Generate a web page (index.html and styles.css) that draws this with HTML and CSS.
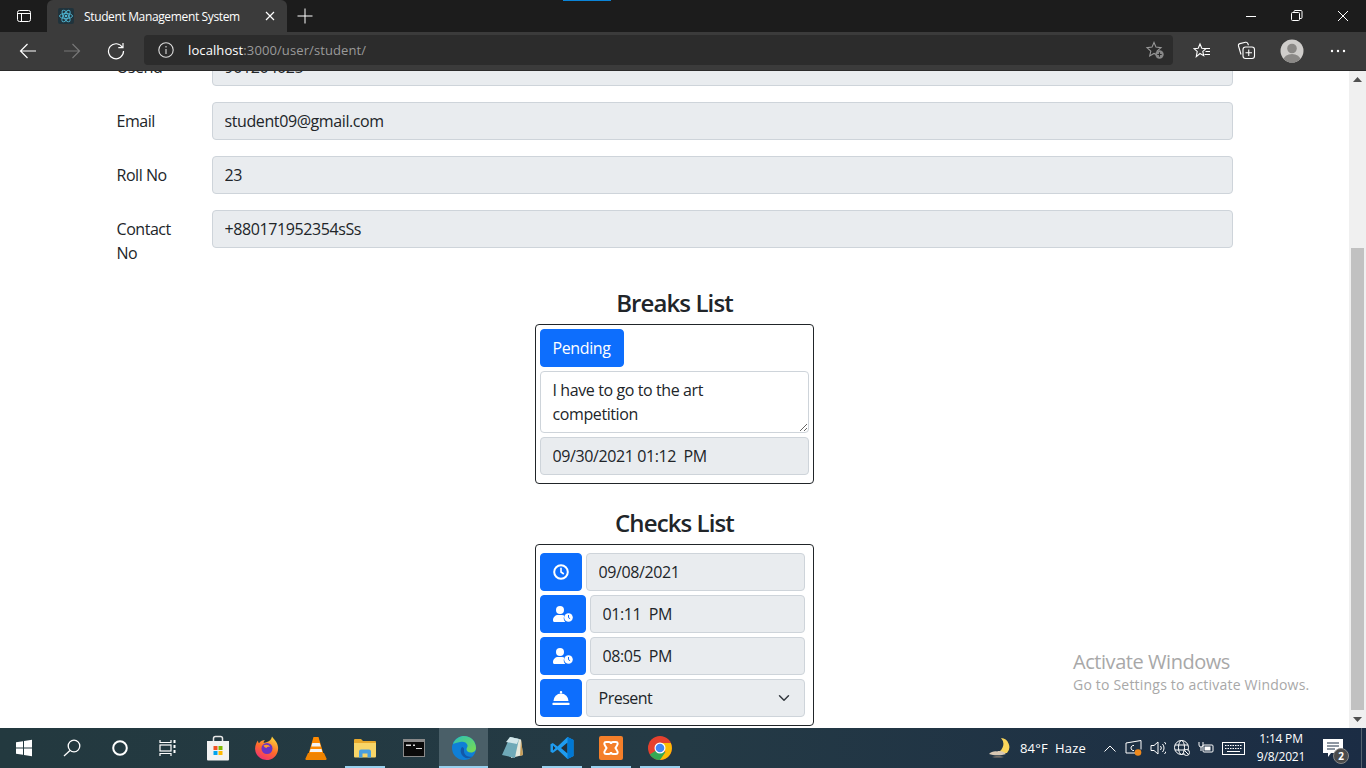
FILE: index.html
```html
<!DOCTYPE html>
<html lang="en">
<head>
    <meta charset="UTF-8">
    <meta name="viewport" content="width=device-width, initial-scale=1.0">
    <title>Student Management System</title>
    <link rel="stylesheet" href="styles.css">
</head>
<body>
    <div class="tabstrip">
        <div class="loading-line"></div>
        <div class="panel-btn">
            <svg width="16" height="16" viewBox="0 0 16 16" fill="none" stroke="#fff"><rect x="1.5" y="2.5" width="13" height="11" rx="2"/><path d="M1.5 5.5h13M5.5 5.5v8"/></svg>
        </div>
        <div class="tab">
            <svg class="favicon" width="16" height="16" viewBox="0 0 16 16" fill="none" stroke="#4fb6d3" stroke-width=".9"><rect width="16" height="16" rx="2" fill="#20333c" stroke="none"/><ellipse cx="8" cy="8" rx="6.5" ry="2.6"/><ellipse cx="8" cy="8" rx="6.5" ry="2.6" transform="rotate(60 8 8)"/><ellipse cx="8" cy="8" rx="6.5" ry="2.6" transform="rotate(120 8 8)"/><circle cx="8" cy="8" r="1.3" fill="#4fb6d3" stroke="none"/></svg>
            <span class="tab-title">Student Management System</span>
            <svg class="tab-close" width="10" height="10" viewBox="0 0 10 10" stroke="#fff" stroke-width="1.2"><path d="M1 1l8 8M9 1l-8 8"/></svg>
        </div>
        <div class="new-tab">
            <svg width="16" height="16" viewBox="0 0 16 16" stroke="#fff"><path d="M8 .5v15M.5 8h15"/></svg>
        </div>
        <div class="window-btns">
            <div class="window-btn"><svg width="12" height="12" viewBox="0 0 12 12" stroke="#fff"><path d="M1 6.5h10"/></svg></div>
            <div class="window-btn"><svg width="12" height="12" viewBox="0 0 12 12" fill="none" stroke="#fff"><rect x=".5" y="2.5" width="8" height="8" rx="1"/><path d="M3 2.5V1.5a1 1 0 0 1 1-1h6a1 1 0 0 1 1 1v6a1 1 0 0 1-1 1H8.5"/></svg></div>
            <div class="window-btn"><svg width="12" height="12" viewBox="0 0 12 12" stroke="#fff"><path d="M1 1l10 10M11 1L1 11"/></svg></div>
        </div>
    </div>

    <div class="toolbar">
        <div class="tool-btn"><svg width="18" height="18" viewBox="0 0 18 18" fill="none" stroke="#fff" stroke-width="1.2"><path d="M17 9H1.5M8.5 2L1.5 9l7 7"/></svg></div>
        <div class="tool-btn"><svg width="18" height="18" viewBox="0 0 18 18" fill="none" stroke="#777" stroke-width="1.2"><path d="M1 9h15.5M9.5 2l7 7-7 7"/></svg></div>
        <div class="tool-btn"><svg width="18" height="18" viewBox="0 0 18 18" fill="none" stroke="#fff" stroke-width="1.2"><path d="M15.5 5.5A7.5 7.5 0 1 0 16.5 9M16 1v4.7h-4.7"/></svg></div>
        <div class="address">
            <svg class="info-icon" width="16" height="16" viewBox="0 0 16 16" fill="none" stroke="#ddd" stroke-width="1.1"><circle cx="8" cy="8" r="7.2"/><path d="M8 7v5M8 4v1.6"/></svg>
            <span class="host">localhost</span><span class="url-rest">:3000/user/student/</span>
            <svg class="star-add" width="20" height="20" viewBox="0 0 20 20" fill="none" stroke="#999" stroke-width="1.1"><path d="M9 2.5l2 4.6 5 .5-3.8 3.3 1.1 4.900L9 13.500 4.700 16l1.100-4.900L2 7.600l5-.5z"/><circle cx="14.500" cy="14.500" r="4.200" fill="#888" stroke="none"/><path d="M14.500 12.300v4.400M12.300 14.500h4.400" stroke="#2b2b2b"/></svg>
        </div>
        <div class="tool-btn first-right"><svg width="18" height="18" viewBox="0 0 18 18" fill="none" stroke="#fff" stroke-width="1.1"><path d="M7 2l1.800 4.200 4.200.4-3.200 2.800.9 4.300L7 11.500 3.300 14.700l.9-5.300L1 6.600l4.200-.4zM12 6.500h5M12.500 9.500h4.500M11.500 12.500h5.500"/></svg></div>
        <div class="tool-btn"><svg width="20" height="20" viewBox="0 0 20 20" fill="none" stroke="#fff" stroke-width="1.1"><path d="M5 13.500 2.500 5a2 2 0 0 1 1.400-2.400l5.600-1.300a2 2 0 0 1 2.300 1.200l.7 1.700"/><rect x="7" y="6" width="11.500" height="11.500" rx="2.500" fill="#3b3b3b"/><path d="M12.750 8.500v6.500M9.500 11.750H16"/></svg></div>
        <div class="tool-btn wide"><svg width="24" height="24" viewBox="0 0 24 24"><defs><clipPath id="av"><circle cx="12" cy="12" r="11.500"/></clipPath></defs><circle cx="12" cy="12" r="11.500" fill="#cfcdcb"/><g clip-path="url(#av)" fill="#8b8987"><circle cx="12" cy="9.500" r="4.800"/><ellipse cx="12" cy="21" rx="8.500" ry="6"/></g></svg></div>
        <div class="tool-btn"><svg width="16" height="4" viewBox="0 0 16 4" fill="#fff"><circle cx="2" cy="2" r="1.200"/><circle cx="8" cy="2" r="1.200"/><circle cx="14" cy="2" r="1.200"/></svg></div>
    </div>

    <div class="viewport">
        <main class="page">
            <div class="container">
                <div class="form-row">
                    <label class="row-label">Userid</label>
                    <input class="form-control" value="901204025" disabled>
                </div>
                <div class="form-row">
                    <label class="row-label">Email</label>
                    <input class="form-control" value="student09@gmail.com" disabled>
                </div>
                <div class="form-row">
                    <label class="row-label">Roll No</label>
                    <input class="form-control" value="23" disabled>
                </div>
                <div class="form-row">
                    <label class="row-label">Contact No</label>
                    <input class="form-control" value="+880171952354sSs" disabled>
                </div>

                <h3 class="list-title breaks-title">Breaks List</h3>
                <div class="list-box breaks-box">
                    <button class="btn pending-btn">Pending</button>
                    <textarea class="form-control break-text" rows="2">I have to go to the art competition</textarea>
                    <input class="form-control" value="09/30/2021 01:12  PM" disabled>
                </div>

                <h3 class="list-title checks-title">Checks List</h3>
                <div class="list-box checks-box">
                    <div class="check-row">
                        <button class="btn icon-btn">
                            <svg width="16" height="16" viewBox="0 0 16 16" fill="none" stroke="#fff" stroke-width="2"><circle cx="8" cy="8" r="6.800"/><path d="M8 3.800V8l2.800 2" stroke-width="1.600"/></svg>
                        </button>
                        <input class="form-control" value="09/08/2021" disabled>
                    </div>
                    <div class="check-row">
                        <button class="btn icon-btn user-btn">
                            <svg width="20" height="16" viewBox="0 0 20 16" fill="#fff"><circle cx="7" cy="4" r="4"/><path d="M0 14.200C0 11 2.500 9 5 9h4c1 0 1.800.3 2.400.7a5.500 5.500 0 0 0 .9 6.300H1.500C.6 16 0 15.200 0 14.200z"/><circle cx="15.500" cy="11.500" r="4.300"/><path d="M15.500 9v2.700l1.600 1" stroke="#0d6efd" fill="none"/></svg>
                        </button>
                        <input class="form-control" value="01:11  PM" disabled>
                    </div>
                    <div class="check-row">
                        <button class="btn icon-btn user-btn">
                            <svg width="20" height="16" viewBox="0 0 20 16" fill="#fff"><circle cx="7" cy="4" r="4"/><path d="M0 14.200C0 11 2.500 9 5 9h4c1 0 1.800.3 2.400.7a5.500 5.500 0 0 0 .9 6.300H1.500C.6 16 0 15.200 0 14.200z"/><circle cx="15.500" cy="11.500" r="4.300"/><path d="M15.500 9v2.700l1.600 1" stroke="#0d6efd" fill="none"/></svg>
                        </button>
                        <input class="form-control" value="08:05  PM" disabled>
                    </div>
                    <div class="check-row">
                        <button class="btn icon-btn">
                            <svg width="18" height="16" viewBox="0 0 18 16" fill="#fff"><rect x="7.800" y="1" width="2.400" height="2.500" rx="1"/><path d="M1.500 11a7.500 7.500 0 0 1 15 0z"/><rect x=".5" y="12.800" width="17" height="2.200" rx=".6"/></svg>
                        </button>
                        <select class="form-select"><option>Present</option></select>
                    </div>
                </div>
            </div>
        </main>
        <div class="scrollbar">
            <div class="scroll-arrow"><svg width="9" height="5" viewBox="0 0 9 5" fill="#505050"><path d="M4.500 0L9 5H0z"/></svg></div>
            <div class="scroll-thumb"></div>
            <div class="scroll-arrow arrow-down"><svg width="9" height="5" viewBox="0 0 9 5" fill="#505050"><path d="M0 0h9L4.500 5z"/></svg></div>
        </div>
        <div class="watermark">
            <div class="watermark-big">Activate Windows</div>
            <div class="watermark-small">Go to Settings to activate Windows.</div>
        </div>
    </div>

    <div class="taskbar">
        <div class="task-item"><svg width="18" height="18" viewBox="0 0 18 18" fill="#fff"><path d="M1 3.200l7-1v6.300H1zM9 2l8-1.200v7.700H9zM1 9.500h7v6.300l-7-1zM9 9.500h8v7.700l-8-1.200z"/></svg></div>
        <div class="task-item"><svg width="18" height="18" viewBox="0 0 18 18" fill="none" stroke="#fff" stroke-width="1.300"><circle cx="11" cy="7" r="5.800"/><path d="M7 11.500L1 17"/></svg></div>
        <div class="task-item"><svg width="16" height="16" viewBox="0 0 16 16" fill="none" stroke="#fff" stroke-width="2"><circle cx="8" cy="8" r="6.800"/></svg></div>
        <div class="task-item"><svg width="18" height="16" viewBox="0 0 18 16" fill="none" stroke="#fff" stroke-width="1.200"><path d="M1 0v2.500h11V0M1 16v-2.500h11V16"/><rect x="1" y="5" width="11" height="6"/><path d="M15.500 0v3M15.500 5v3M15.500 10v3" stroke-width="2"/></svg></div>
        <div class="task-item app first-app"><svg width="24" height="26" viewBox="0 0 24 26"><path d="M7.500 7V3.500a2 2 0 0 1 2-2h5a2 2 0 0 1 2 2V7" fill="none" stroke="#e8e8e8" stroke-width="1.500"/><path d="M1 6h22v18.500a1 1 0 0 1-1 1H2a1 1 0 0 1-1-1z" fill="#f2f2f2"/><rect x="7.500" y="11" width="4" height="4" fill="#f25022"/><rect x="12.500" y="11" width="4" height="4" fill="#7fba00"/><rect x="7.500" y="16" width="4" height="4" fill="#00a4ef"/><rect x="12.500" y="16" width="4" height="4" fill="#ffb900"/></svg></div>
        <div class="task-item app"><svg width="24" height="24" viewBox="0 0 24 24"><defs><linearGradient id="fx" x1="0.700" y1="0" x2="0.200" y2="1"><stop offset="0" stop-color="#ffd23a"/><stop offset=".5" stop-color="#ff6b2a"/><stop offset="1" stop-color="#ee2a7b"/></linearGradient></defs><path d="M17 .5c1 2 5.500 5 6 10.500A11.500 11.500 0 1 1 1 8c.500-1.500 1.200-2.500 2-3.500 0 1.500.5 2.300 1 2.800C5.500 5 8 4 10 4c-1 1-1.500 2-1.500 2.800C11 6.500 16 6 17 .5z" fill="url(#fx)"/><circle cx="12" cy="12.500" r="5.500" fill="#6b33c4"/><path d="M8.500 9.500c2-1.500 6-1 6.500 1.500-1.500-.5-3 0-3.500 1-1 0-2.500-1-3-2.500z" fill="#ff9a2e"/></svg></div>
        <div class="task-item app"><svg width="22" height="24" viewBox="0 0 22 24"><path d="M8.500 1h5l5 17h-15z" fill="#ff8a00"/><path d="M7.300 7h7.400l1 3.500H6.300zM5.500 13h11l.8 3H4.700z" fill="#f4f4f4"/><path d="M3 17h16l2.500 5.500a1 1 0 0 1-1 1.500h-19a1 1 0 0 1-1-1.500z" fill="#f08300"/></svg></div>
        <div class="task-item app underlined"><svg width="22" height="20" viewBox="0 0 22 20"><path d="M0 2a1 1 0 0 1 1-1h6l2 2h12a1 1 0 0 1 1 1v3H0z" fill="#e8a92c"/><path d="M0 5h22v13.500a1 1 0 0 1-1 1H1a1 1 0 0 1-1-1z" fill="#f8d568"/><path d="M5 19.500v-6a2 2 0 0 1 2-2h8a2 2 0 0 1 2 2v6h-3.500v-4h-5v4z" fill="#4a9fe0"/></svg></div>
        <div class="task-item app"><svg width="22" height="18" viewBox="0 0 22 18"><rect width="22" height="18" fill="#8a8a8a"/><rect x="1" y="3" width="20" height="14" fill="#0a0a0a"/><path d="M3 5.500h5v1.500H3zM10 5.500h2V7h-2zM13 9h6v1h-6z" fill="#ddd"/></svg></div>
        <div class="task-item app active"><svg width="24" height="24" viewBox="0 0 24 24"><defs><linearGradient id="eg" x1="0" y1="0" x2="1" y2="1"><stop offset="0" stop-color="#2bc1b6"/><stop offset="1" stop-color="#7cdc4e"/></linearGradient></defs><circle cx="12" cy="12" r="12" fill="#0f7fd6"/><path d="M1 8C3 2.500 8 0 12 0c7 0 12 5.500 12 12 0 3-2.500 4.500-5 4.500-3 0-4.500-1.500-4.500-3 0-2 1.500-2.500 1-4.500C14.500 6 11 5 8 6c-3 .8-5.500 1.500-7 2z" fill="url(#eg)"/><path d="M10 11c-2 2-2 7 2 10 2.500 1.800 6 1.500 8.500-.5-2 .5-8 .5-8.500-5 0-2 .5-4-2-4.500z" fill="#1258a8"/></svg></div>
        <div class="task-item app"><svg width="24" height="24" viewBox="0 0 24 24"><path d="M9 1l11 2.500 2 15.500-12 3z" fill="#e6e8dc"/><path d="M9 1l9 2-3 13.500-1 5.500-13-3z" fill="#6fa9b8"/><path d="M9 1l9 2-2 5L5 6z" fill="#d2e6ea"/><path d="M20 3.500L22 19l-3 1z" fill="#c49a55"/></svg></div>
        <div class="task-item app underlined"><svg width="24" height="24" viewBox="0 0 24 24"><path d="M17.500 1L23.500 4v16L17.500 23 7.500 13.500 2.800 17 .5 15.800V8.200L2.800 7l4.700 3.500z" fill="#1f9cf0"/><path d="M17.500 6.500L11 12l6.500 5.500zM3 9.500V14.500L5.500 12z" fill="#24303a"/><path d="M17.500 1L23.500 4v16L17.500 23z" fill="#0078d4"/></svg></div>
        <div class="task-item app underlined"><svg width="24" height="24" viewBox="0 0 24 24"><rect width="24" height="24" rx="2" fill="#f47f2a"/><path d="M7 6h3c1.500 0 2 1 2 2 0-1 .5-2 2-2h3c2 0 2 2 1 3.500l-1.500 2.500 1.500 2.500C19 16 19 18 17 18h-3c-1.500 0-2-1-2-2 0 1-.5 2-2 2H7c-2 0-2-2-1-3.500L7.500 12 6 9.500C5 8 5 6 7 6z" fill="none" stroke="#fff" stroke-width="2"/></svg></div>
        <div class="task-item app underlined"><svg width="24" height="24" viewBox="0 0 24 24"><circle cx="12" cy="12" r="12" fill="#e5412e"/><path d="M12 12L1.800 18.500A12 12 0 0 0 12 24l5.800-7z" fill="#34a853"/><path d="M12 7h10.800A12 12 0 0 1 12 24l5.500-8z" fill="#fbbc05"/><circle cx="12" cy="12" r="5.500" fill="#fff"/><circle cx="12" cy="12" r="4.300" fill="#4285f4"/></svg></div>

        <div class="tray">
            <svg class="weather-icon" width="22" height="22" viewBox="0 0 22 22"><path d="M13 1a9 9 0 0 1-6 15h12A9 9 0 0 0 13 1z" fill="#f9d55b"/><path d="M1 17c2-2 5-3 8-2.500 3-1 7 0 9 2.500-4 1.500-12 2-17 0z" fill="#d8c8b4"/><path d="M4 20c3-1 9-1 12 0-3 .8-9 .8-12 0z" fill="#8f8274"/></svg>
            <span class="weather-text">84°F&nbsp; Haze</span>
            <svg class="tray-chevron" width="12" height="7" viewBox="0 0 12 7" fill="none" stroke="#fff"><path d="M.5 6.500L6 1l5.500 5.500"/></svg>
            <svg class="tray-icon" width="17" height="16" viewBox="0 0 17 16" fill="none" stroke="#fff"><path d="M1 3l15-2.500v9M1 3v10h9"/><path d="M9 5.500a2.500 2.500 0 0 0-3 2.500 2.500 2.500 0 0 0 3 2.500"/><circle cx="13" cy="12.500" r="3.300" fill="#f08a1d" stroke="none"/></svg>
            <svg class="tray-icon" width="16" height="14" viewBox="0 0 16 14" fill="none" stroke="#fff"><path d="M1 4.500h3l4-3.500v12L4 9.500H1zM10.500 5a3 3 0 0 1 0 4M12.500 3a6 6 0 0 1 0 8M14.500 1a8.500 8.500 0 0 1 0 12"/></svg>
            <svg class="tray-icon" width="16" height="16" viewBox="0 0 16 16" fill="none" stroke="#fff"><circle cx="7.500" cy="7.500" r="7"/><ellipse cx="7.500" cy="7.500" rx="3" ry="7"/><path d="M1 5h13M1 10h13"/><circle cx="12.500" cy="12.500" r="3" fill="#1d2f44"/><path d="M10.500 10.500l4 4"/></svg>
            <svg class="tray-icon" width="16" height="14" viewBox="0 0 16 14" fill="none" stroke="#fff"><rect x="5" y="4" width="10" height="7" rx="1"/><rect x="6.500" y="5.500" width="6" height="4" fill="#fff" stroke="none"/><path d="M1 1v3a2 2 0 0 0 4 0V1M3 6v4"/></svg>
            <svg class="tray-icon" width="23" height="13" viewBox="0 0 23 13" fill="none" stroke="#fff"><rect x=".5" y=".5" width="22" height="12"/><path d="M3 3.500h17M3 6.500h17" stroke-dasharray="1.500 1"/><path d="M5 9.500h13"/></svg>
            <div class="clock">
                <div>1:14 PM</div>
                <div>9/8/2021</div>
            </div>
            <div class="notify">
                <svg width="20" height="18" viewBox="0 0 20 18" fill="#fff"><path d="M0 0h20v14H8l-3 4v-4H0z"/><path d="M4 4h12M4 7h12M4 10h8" stroke="#1d2f44"/></svg>
                <span class="notify-badge">2</span>
            </div>
            <div class="show-desktop"></div>
        </div>
    </div>
</body>
</html>
```

FILE: styles.css
```css
* { box-sizing: border-box; }
html, body { height: 100%; }
body { margin: 0; height: 768px; overflow: hidden; display: flex; flex-direction: column; font-family: "Open Sans", "Noto Sans", sans-serif; color: #212529; background-color: #fff; position: relative; }

/* browser chrome */
.tabstrip { height: 32px; display: flex; background-color: #1c1c1c; color: #fff; position: relative; flex-shrink: 0; }
.loading-line { position: absolute; top: 0; left: 563px; width: 48px; height: 1px; background-color: #0a84d8; }
.panel-btn { width: 47px; display: flex; align-items: center; justify-content: center; }
.tab { width: 240px; display: flex; align-items: center; background-color: #3b3b3b; border-radius: 6px 6px 0 0; padding: 0 12px 0 11px; }
.favicon { flex-shrink: 0; }
.tab-title { font-size: 12px; margin-left: 10px; flex: 1; white-space: nowrap; letter-spacing: -0.36px; }
.new-tab { width: 36px; display: flex; align-items: center; justify-content: center; }
.window-btns { margin-left: auto; display: flex; }
.window-btn { width: 46px; display: flex; align-items: center; justify-content: center; }

.toolbar { height: 39px; display: flex; align-items: center; padding-left: 6px; background-color: #3b3b3b; border-bottom: 1px solid #2a2a2a; flex-shrink: 0; }
.tool-btn { width: 44px; height: 32px; display: flex; align-items: center; justify-content: center; }
.tool-btn.wide { width: 48px; }
.tool-btn.first-right { margin-left: 7px; }
.address { width: 1029px; height: 30px; margin-left: 6px; margin-top: -2px; display: flex; align-items: center; padding: 0 8px 0 14px; background-color: #2c2c2c; border-radius: 4px; font-size: 13px; letter-spacing: 0.1px; }
.info-icon { margin-right: 14px; }
.host { color: #fff; }
.url-rest { color: #9a9a9a; }
.star-add { margin-left: auto; }

/* page */
.viewport { flex: 1; display: flex; min-height: 0; position: relative; }
.page { flex: 1; overflow: hidden; }
.container { width: 1140px; margin: -23px auto 0; padding: 0 12px; }
.form-row { display: grid; grid-template-columns: 71px 1fr; column-gap: 24px; margin-bottom: 16px; font-size: 16px; line-height: 24px; }
.row-label { padding-top: 7px; letter-spacing: -0.45px; }
.form-control { display: block; width: 100%; height: 38px; padding: 6px 12px; font: inherit; font-size: 16px; line-height: 24px; letter-spacing: -0.4px; color: #212529; background-color: #fff; border: 1px solid #ced4da; border-radius: 4px; opacity: 1; }
.form-control:disabled { background-color: #e9ecef; }
.list-title { margin: 0; font-size: 24px; line-height: 29px; font-weight: 600; text-align: center; letter-spacing: -0.9px; color: #212529; }
.breaks-title { margin-top: 23px; margin-bottom: 7px; }
.checks-title { margin-top: 24px; margin-bottom: 7px; }
.list-box { width: 279px; margin: 0 auto; border: 1px solid #212529; border-radius: 4px; padding: 4px; }
.breaks-box { padding-bottom: 8px; margin-left: 418px; }
.breaks-box .form-control { margin-top: 4px; }
.break-text { height: 62px; padding-right: 40px; }
.btn { height: 38px; padding: 6px 12px; font: inherit; font-size: 16px; line-height: 24px; letter-spacing: -0.4px; color: #fff; background-color: #0d6efd; border: 1px solid #0d6efd; border-radius: 4px; }
.pending-btn { display: block; width: 84px; }
.checks-box { margin-left: 418px; padding: 8px 8px 8px 4px; display: flex; flex-direction: column; gap: 4px; }
.check-row { display: flex; gap: 4px; }
.icon-btn { width: 42px; padding: 0; flex-shrink: 0; display: flex; align-items: center; justify-content: center; }
.icon-btn.user-btn { width: 46px; }
.form-select { flex: 1; min-width: 0; height: 38px; padding: 6px 36px 6px 12px; font: inherit; font-size: 16px; line-height: 24px; letter-spacing: -0.5px; color: #212529; background-color: #e9ecef; background-image: url("data:image/svg+xml,%3csvg xmlns='http://www.w3.org/2000/svg' viewBox='0 0 16 16'%3e%3cpath fill='none' stroke='%23343a40' stroke-linecap='round' stroke-linejoin='round' stroke-width='2' d='M2 5l6 6 6-6'/%3e%3c/svg%3e"); background-repeat: no-repeat; background-position: right 12px center; background-size: 16px 12px; border: 1px solid #ced4da; border-radius: 4px; appearance: none; }

/* scrollbar */
.scrollbar { width: 17px; display: flex; flex-direction: column; align-items: center; background-color: #f0f0f0; flex-shrink: 0; }
.scroll-arrow { height: 17px; display: flex; align-items: center; justify-content: center; }
.scroll-thumb { width: 13px; height: 462px; margin-top: 160px; background-color: #c1c1c1; }
.arrow-down { margin-top: auto; }

.watermark { position: absolute; left: 1073px; top: 578px; white-space: nowrap; color: #a8a8a8; }
.watermark-big { font-size: 20px; line-height: 26px; letter-spacing: -0.45px; }
.watermark-small { font-size: 14px; line-height: 20px; letter-spacing: 0.2px; }

/* taskbar */
.taskbar { height: 40px; display: flex; align-items: stretch; background: linear-gradient(90deg, #23393f 0%, #243a45 50%, #1b2c44 100%); color: #fff; flex-shrink: 0; }
.task-item { width: 48px; display: flex; align-items: center; justify-content: center; position: relative; flex-shrink: 0; }
.task-item.app { width: 49.2px; }
.task-item.first-app { margin-left: 1px; }
.task-item.underlined::after { content: ""; position: absolute; left: 4.6px; right: 4.6px; bottom: 0; height: 2px; background-color: #98d0ee; }
.task-item.active { background-color: #4a5f68; }
.task-item.active::after { content: ""; position: absolute; left: 0; right: 0; bottom: 0; height: 2px; background-color: #98d0ee; }
.tray { margin-left: auto; display: flex; align-items: center; }
.weather-text { font-size: 13px; margin-left: 10px; margin-right: 18px; letter-spacing: 0.2px; white-space: nowrap; }
.tray-chevron { margin-right: 1px; }
.tray-icon { margin-left: 8px; }
.clock { width: 60px; margin-left: 6px; text-align: center; font-size: 12px; line-height: 18px; letter-spacing: -0.2px; }
.notify { width: 42px; height: 40px; margin-left: 1px; margin-right: 7px; display: flex; align-items: center; justify-content: center; position: relative; }
.notify-badge { position: absolute; right: 5px; bottom: 4px; width: 16px; height: 16px; border-radius: 50%; background-color: #4b4b4b; border: 1px solid #888; font-size: 10px; line-height: 14px; text-align: center; font-weight: 700; }
.show-desktop { width: 5px; height: 40px; border-left: 1px solid #55636f; }
```
